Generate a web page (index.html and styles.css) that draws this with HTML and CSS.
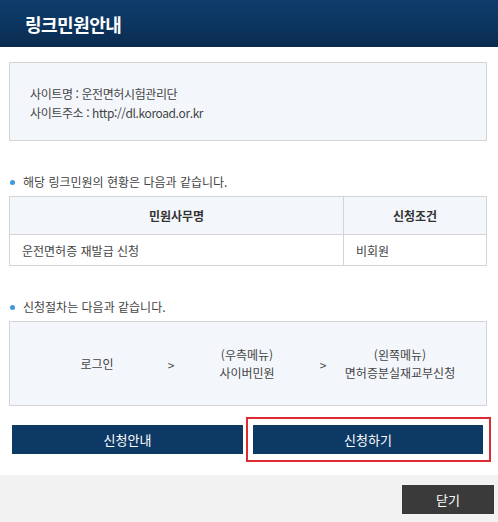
FILE: index.html
```html
<!DOCTYPE html>
<html lang="ko">
<head>
<meta charset="utf-8">
<title>링크민원안내</title>
<link rel="stylesheet" href="styles.css">
</head>
<body>
<div class="popup">
  <header class="head"><h1 class="title">링크민원안내</h1></header>
  <main class="content">
    <div class="site-box">
      <p class="site-line">사이트명 : 운전면허시험관리단</p>
      <p class="site-line">사이트주소 : http://dl.koroad.or.kr</p>
    </div>
    <p class="bullet">해당 링크민원의 현황은 다음과 같습니다.</p>
    <table class="grid">
      <thead>
        <tr><th class="col-name">민원사무명</th><th class="col-cond">신청조건</th></tr>
      </thead>
      <tbody>
        <tr><td>운전면허증 재발급 신청</td><td>비회원</td></tr>
      </tbody>
    </table>
    <p class="bullet">신청절차는 다음과 같습니다.</p>
    <div class="steps">
      <div class="step s1">로그인</div>
      <div class="arrow">&gt;</div>
      <div class="step s2">(우측메뉴)<br>사이버민원</div>
      <div class="arrow">&gt;</div>
      <div class="step s3">(왼쪽메뉴)<br>면허증분실재교부신청</div>
    </div>
    <div class="actions">
      <button class="btn btn-guide">신청안내</button>
      <div class="highlight"><button class="btn btn-apply">신청하기</button></div>
    </div>
  </main>
  <footer class="foot"><button class="close">닫기</button></footer>
</div>
</body>
</html>
```

FILE: styles.css
```css
* { box-sizing: border-box; }
html, body { margin: 0; padding: 0; background: #fff; }
body {
  font-family: "Noto Sans CJK KR", "Noto Sans", "Liberation Sans", sans-serif;
  font-size: 12px;
  color: #444;
  width: 498px;
  height: 522px;
  overflow: hidden;
}
.popup { display: flex; flex-direction: column; height: 522px; }
.head {
  height: 48px;
  background: linear-gradient(#0e3c6b 0%, #0c3763 45%, #0b2b4e 100%);
  display: flex;
  align-items: center;
  padding-left: 25px;
}
.title {
  margin: 0;
  font-size: 18px;
  font-weight: 700;
  color: #fff;
  letter-spacing: -0.5px;
  line-height: 20px;
}
.content { padding: 0 11px 0 9px; flex: 1; }
.site-box {
  margin-top: 15px;
  height: 79px;
  border: 1px solid #d4d4d4;
  background: #f3f7fc;
  padding: 21px 20px 0;
}
.site-line { margin: 0; line-height: 19px; letter-spacing: -0.4px; color: #444; }
.bullet {
  margin: 32px 0 0;
  line-height: 18px;
  padding-left: 14px;
  position: relative;
  color: #444;
}
.bullet::before {
  content: "";
  position: absolute;
  left: 1px;
  top: 7px;
  width: 5px;
  height: 5px;
  border-radius: 50%;
  background: #3d9ad8;
}
.grid {
  margin-top: 5px;
  width: 100%;
  border-collapse: collapse;
  border: 1px solid #d4d4d4;
}
.grid th, .grid td { border: 1px solid #d4d4d4; }
.grid th {
  height: 38px;
  background: #f3f7fc;
  font-weight: 700;
  color: #333;
  text-align: center;
  padding: 0;
}
.col-name { width: 334px; }
.grid td {
  height: 31px;
  padding: 0 12px;
  text-align: left;
  color: #444;
}
.steps {
  margin-top: 5px;
  height: 85px;
  border: 1px solid #d4d4d4;
  background: #f3f7fc;
  display: flex;
  align-items: center;
  padding-left: 27px;
  line-height: 18px;
  color: #444;
}
.step { text-align: center; white-space: nowrap; }
.s1 { width: 120px; }
.s2 { width: 124px; }
.s3 { width: 126px; }
.arrow { width: 28px; text-align: center; padding-top: 2px; }
.actions {
  display: flex;
  align-items: center;
  margin-top: 11px;
  padding-left: 3px;
  gap: 3px;
}
.btn {
  border: 0;
  margin: 0;
  height: 29px;
  background: #0d3a65;
  color: #fff;
  font-family: inherit;
  font-size: 13px;
  padding: 0;
  flex-shrink: 0;
}
.btn-guide { width: 231px; }
.btn-apply { width: 230px; display: block; }
.highlight {
  flex-shrink: 0;
  border: 2px solid #dd2a33;
  padding: 6px 6px 6px 5px;
}
.foot {
  margin-top: 13px;
  height: 47px;
  background: #f2f2f2;
  display: flex;
  justify-content: flex-end;
  padding: 10px 4px 0 0;
}
.close {
  width: 92px;
  height: 29px;
  border: 0;
  background: #3a3a3a;
  color: #fff;
  font-family: inherit;
  font-size: 13px;
  padding: 0;
}
```
